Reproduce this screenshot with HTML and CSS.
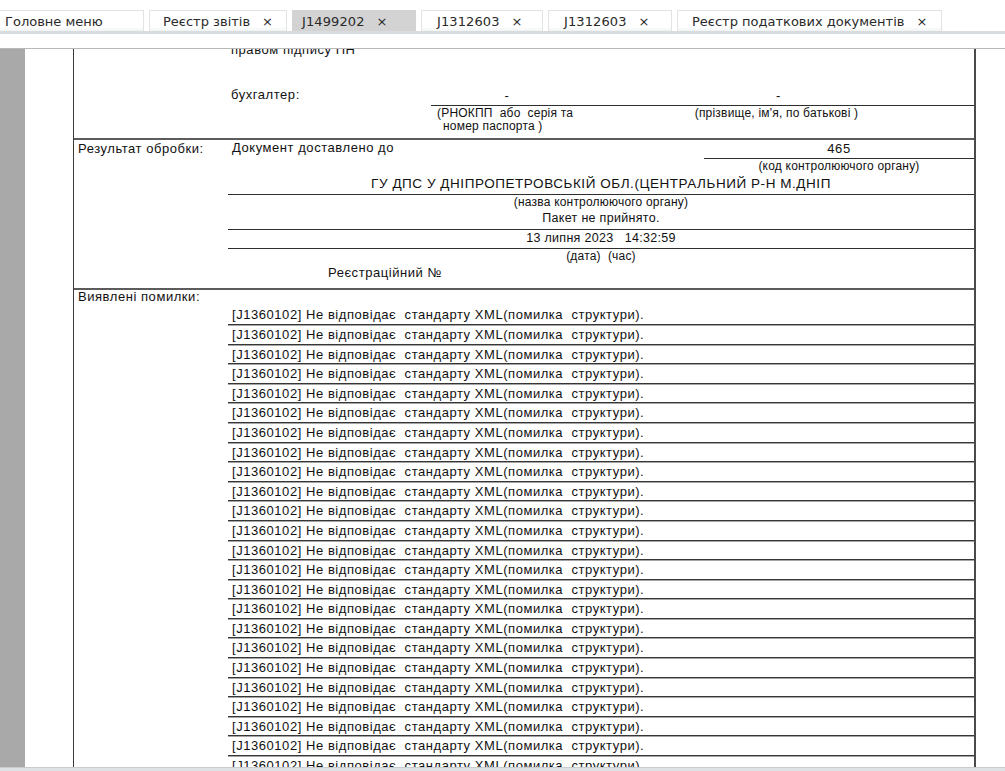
FILE: index.html
```html
<!DOCTYPE html>
<html lang="uk">
<head>
<meta charset="utf-8">
<title>J1499202</title>
<link rel="stylesheet" href="styles.css">
</head>
<body>
<div class="app">
  <div class="tabbar">
    <div class="tab tab-home"><span>Головне меню</span></div>
    <div class="tab tab-reg"><span>Реєстр звітів</span><span class="x">×</span></div>
    <div class="tab tab-active"><span class="code-font">J1499202</span><span class="x">×</span></div>
    <div class="tab tab-doc"><span class="code-font">J1312603</span><span class="x">×</span></div>
    <div class="tab tab-doc2"><span class="code-font">J1312603</span><span class="x">×</span></div>
    <div class="tab tab-tax"><span>Реєстр податкових документів</span><span class="x">×</span></div>
  </div>
  <div class="spacer"></div>
  <div class="viewer">
    <div class="gutter"></div>
    <div class="canvas">
      <div class="doc">
        <div class="row row-sign">
          <div class="label"></div>
          <div class="content">
            <div class="top-line">правом підпису ПН</div>
            <div class="sign">
              <div class="sign-label">бухгалтер:</div>
              <div class="sign-field f-id">
                <div class="val">-</div>
                <div class="cap"><span class="cap-l1">(РНОКПП&nbsp; або&nbsp; серія та</span><span class="cap-l2">номер паспорта )</span></div>
              </div>
              <div class="sign-field f-name">
                <div class="val">-</div>
                <div class="cap">(прізвище, ім'я, по батькові )</div>
              </div>
            </div>
          </div>
        </div>
        <div class="row row-result">
          <div class="label">Результат обробки:</div>
          <div class="content">
            <div class="res-head">
              <div class="res-text">Документ доставлено до</div>
              <div class="code-box">465</div>
            </div>
            <div class="code-cap">(код контролюючого органу)</div>
            <div class="org">ГУ ДПС У ДНІПРОПЕТРОВСЬКІЙ ОБЛ.(ЦЕНТРАЛЬНИЙ Р-Н М.ДНІП</div>
            <div class="cap-c cap-org">(назва контролюючого органу)</div>
            <div class="status">Пакет не прийнято.</div>
            <div class="date">13 липня 2023&nbsp;&nbsp; 14:32:59</div>
            <div class="cap-c cap-date">(дата)&nbsp; (час)</div>
            <div class="regno">Реєстраційний №</div>
          </div>
        </div>
        <div class="row row-err">
          <div class="label">Виявлені помилки:</div>
          <div class="content errors">
            <div class="err">[J1360102] Не відповідає&nbsp; стандарту XML(помилка&nbsp; структури).</div>
            <div class="err">[J1360102] Не відповідає&nbsp; стандарту XML(помилка&nbsp; структури).</div>
            <div class="err">[J1360102] Не відповідає&nbsp; стандарту XML(помилка&nbsp; структури).</div>
            <div class="err">[J1360102] Не відповідає&nbsp; стандарту XML(помилка&nbsp; структури).</div>
            <div class="err">[J1360102] Не відповідає&nbsp; стандарту XML(помилка&nbsp; структури).</div>
            <div class="err">[J1360102] Не відповідає&nbsp; стандарту XML(помилка&nbsp; структури).</div>
            <div class="err">[J1360102] Не відповідає&nbsp; стандарту XML(помилка&nbsp; структури).</div>
            <div class="err">[J1360102] Не відповідає&nbsp; стандарту XML(помилка&nbsp; структури).</div>
            <div class="err">[J1360102] Не відповідає&nbsp; стандарту XML(помилка&nbsp; структури).</div>
            <div class="err">[J1360102] Не відповідає&nbsp; стандарту XML(помилка&nbsp; структури).</div>
            <div class="err">[J1360102] Не відповідає&nbsp; стандарту XML(помилка&nbsp; структури).</div>
            <div class="err">[J1360102] Не відповідає&nbsp; стандарту XML(помилка&nbsp; структури).</div>
            <div class="err">[J1360102] Не відповідає&nbsp; стандарту XML(помилка&nbsp; структури).</div>
            <div class="err">[J1360102] Не відповідає&nbsp; стандарту XML(помилка&nbsp; структури).</div>
            <div class="err">[J1360102] Не відповідає&nbsp; стандарту XML(помилка&nbsp; структури).</div>
            <div class="err">[J1360102] Не відповідає&nbsp; стандарту XML(помилка&nbsp; структури).</div>
            <div class="err">[J1360102] Не відповідає&nbsp; стандарту XML(помилка&nbsp; структури).</div>
            <div class="err">[J1360102] Не відповідає&nbsp; стандарту XML(помилка&nbsp; структури).</div>
            <div class="err">[J1360102] Не відповідає&nbsp; стандарту XML(помилка&nbsp; структури).</div>
            <div class="err">[J1360102] Не відповідає&nbsp; стандарту XML(помилка&nbsp; структури).</div>
            <div class="err">[J1360102] Не відповідає&nbsp; стандарту XML(помилка&nbsp; структури).</div>
            <div class="err">[J1360102] Не відповідає&nbsp; стандарту XML(помилка&nbsp; структури).</div>
            <div class="err">[J1360102] Не відповідає&nbsp; стандарту XML(помилка&nbsp; структури).</div>
            <div class="err">[J1360102] Не відповідає&nbsp; стандарту XML(помилка&nbsp; структури).</div>
            <div class="err">[J1360102] Не відповідає&nbsp; стандарту XML(помилка&nbsp; структури).</div>
            <div class="err">[J1360102] Не відповідає&nbsp; стандарту XML(помилка&nbsp; структури).</div>
          </div>
        </div>
      </div>
    </div>
  </div>
  <div class="footer"></div>
</div>
</body>
</html>
```
FILE: styles.css
```css
html, body {
  margin: 0;
  padding: 0;
  background: #ffffff;
}
body {
  font-family: "Liberation Sans", Arial, sans-serif;
  color: #000;
  overflow: hidden;
}
.app {
  width: 1005px;
  height: 771px;
  display: flex;
  flex-direction: column;
  overflow: hidden;
}

/* ---------- tabs ---------- */
.tabbar {
  flex: none;
  height: 21px;
  padding-top: 10px;
  border-bottom: 3px solid #d9dcdf;
  display: flex;
  gap: 5px;
  font-family: "DejaVu Sans", Verdana, sans-serif;
  font-size: 13px;
  color: #2a2a2a;
}
.tab {
  flex: none;
  box-sizing: border-box;
  height: 21px;
  display: flex;
  align-items: center;
  gap: 12px;
  padding-left: 15px;
  background: linear-gradient(#ffffff 0, #ffffff 80%, #f1f2f3 100%);
  border: 1px solid #e3e3e3;
  border-bottom: none;
}
.tab .x {
  font-size: 13px;
}
.code-font {
  letter-spacing: 0.1px;
}
.tab-home { width: 144px; padding-left: 5px; border-left: none; }
.tab-reg { width: 138px; padding-left: 13px; }
.tab-active { width: 124px; padding-left: 9px; background: #d3d3d3; border-color: #d3d3d3; }
.tab-doc { width: 122px; }
.tab-doc2 { width: 124px; }
.tab-tax { width: 265px; padding-left: 14px; }

.spacer {
  flex: none;
  height: 14px;
}

/* ---------- viewer ---------- */
.viewer {
  flex: none;
  box-sizing: border-box;
  height: 719px;
  border-top: 1px solid #b8b8b8;
  display: flex;
  overflow: hidden;
}
.gutter {
  flex: none;
  width: 25px;
  background: #a9a9a9;
}
.canvas {
  flex: 1;
  overflow: hidden;
  padding-left: 48px;
}
.footer {
  flex: none;
  box-sizing: border-box;
  height: 4px;
  background: #dfe2e5;
  border-top: 1px solid #c8ccd0;
}

/* ---------- document ---------- */
.doc {
  width: 903px;
  box-sizing: border-box;
  margin-top: -5px;
  border-left: 1px solid #3a3a3a;
  border-right: 2px solid #4a4a4a;
  font-size: 13px;
  letter-spacing: 0.55px;
  line-height: 15px;
  color: #111;
}
.row {
  display: flex;
  border-top: 2px solid #5c5c5c;
}
.row-sign {
  border-top: none;
  height: 94px;
}
.label {
  flex: none;
  width: 150px;
  padding-left: 4px;
}
.content {
  flex: 1;
  display: flex;
  flex-direction: column;
}

/* signature block */
.top-line {
  height: 16px;
  line-height: 16px;
  margin-top: -2px;
  padding-left: 3px;
}
.sign {
  margin-top: 29px;
  display: flex;
}
.sign-label {
  flex: none;
  width: 200px;
  padding-left: 3px;
  line-height: 16px;
}
.sign-field {
  display: flex;
  flex-direction: column;
}
.f-id { flex: none; width: 152px; }
.f-name { flex: 1; }
.val {
  height: 18px;
  line-height: 18px;
  text-align: center;
  border-bottom: 1px solid #2e2e2e;
}
.cap {
  font-size: 12px;
  line-height: 13px;
  letter-spacing: 0.2px;
  text-align: center;
  padding-top: 1px;
}
.f-id .cap {
  display: flex;
  flex-direction: column;
  text-align: left;
  padding-left: 6px;
}
.cap-l2 {
  padding-left: 6px;
}
.f-name .cap {
  padding-right: 4px;
}

/* result block */
.row-result .label {
  padding-top: 1px;
}
.res-head {
  display: flex;
  height: 19px;
}
.res-text {
  flex: 1;
  padding-left: 4px;
  line-height: 16px;
}
.code-box {
  flex: none;
  width: 270px;
  box-sizing: border-box;
  height: 19px;
  line-height: 17px;
  text-align: center;
  border-bottom: 1px solid #2e2e2e;
}
.code-cap {
  align-self: flex-end;
  width: 270px;
  height: 16px;
  line-height: 15px;
  text-align: center;
  font-size: 12px;
  letter-spacing: 0.2px;
}
.org {
  box-sizing: border-box;
  height: 20px;
  line-height: 17px;
  text-align: center;
  border-bottom: 1px solid #2e2e2e;
  font-size: 13.5px;
}
.cap-c {
  text-align: center;
  font-size: 12px;
  letter-spacing: 0.2px;
}
.cap-org {
  height: 15px;
  line-height: 15px;
}
.status {
  box-sizing: border-box;
  height: 20px;
  line-height: 17px;
  text-align: center;
  border-bottom: 1px solid #2e2e2e;
  font-size: 12.5px;
  letter-spacing: 0.3px;
}
.date {
  box-sizing: border-box;
  height: 19px;
  line-height: 17px;
  text-align: center;
  border-bottom: 1px solid #2e2e2e;
  font-size: 12.5px;
  letter-spacing: 0.3px;
}
.cap-date {
  height: 16px;
  line-height: 15px;
}
.regno {
  height: 23px;
  line-height: 16px;
  padding-left: 100px;
}

/* error list */
.row-err .label {
  line-height: 13px;
}
.errors {
  padding-top: 15.4px;
}
.err {
  flex: none;
  box-sizing: border-box;
  height: 19.6px;
  line-height: 16px;
  padding-top: 2px;
  padding-left: 4px;
  border-bottom: 1px solid #363636;
  box-shadow: 0 1px 0 #a5a5a5;
  white-space: nowrap;
}
```
